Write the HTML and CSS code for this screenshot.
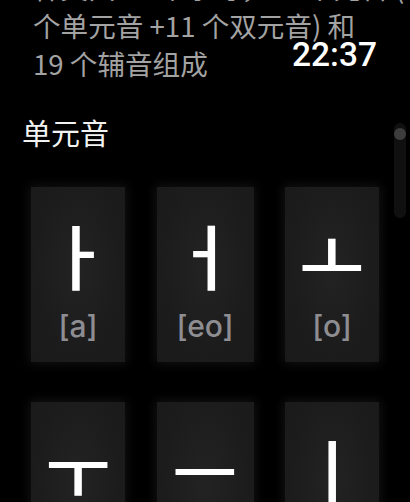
FILE: index.html
```html
<!DOCTYPE html>
<html lang="zh">
<head>
<meta charset="utf-8">
<link rel="stylesheet" href="styles.css">
</head>
<body>
<div class="screen">
  <div class="intro">
    <span class="line">韩文共 40 个字母，21 个元音 (10</span>
    <span class="line">个单元音 +11 个双元音) 和</span>
    <span class="line">19 个辅音组成</span>
  </div>
  <h2 class="title">单元音</h2>
  <div class="grid">
    <div class="card"><div class="jamo">ㅏ</div><div class="roman">[a]</div></div>
    <div class="card"><div class="jamo">ㅓ</div><div class="roman">[eo]</div></div>
    <div class="card"><div class="jamo">ㅗ</div><div class="roman">[o]</div></div>
    <div class="card"><div class="jamo">ㅜ</div><div class="roman">[u]</div></div>
    <div class="card"><div class="jamo">ㅡ</div><div class="roman">[eu]</div></div>
    <div class="card"><div class="jamo">ㅣ</div><div class="roman">[i]</div></div>
  </div>
  <div class="time">22:37</div>
  <div class="scroll"><div class="knob"></div></div>
</div>
</body>
</html>
```

FILE: styles.css
```css
html, body {
  margin: 0;
  padding: 0;
  background: #000;
}
.screen {
  position: relative;
  width: 410px;
  height: 502px;
  overflow: hidden;
  background: #000;
  font-family: "Noto Sans CJK SC", "Noto Sans", sans-serif;
}
.intro {
  margin-top: -32px;
  padding-left: 33px;
  font-size: 27.6px;
  line-height: 38px;
  color: #a3a3a3;
}
.line {
  display: block;
  white-space: nowrap;
}
.title {
  margin: 30px 0 0 22px;
  font-size: 29px;
  line-height: 40px;
  font-weight: 400;
  color: #f2f2f2;
}
.grid {
  margin-top: 35px;
  padding-left: 31px;
  display: grid;
  grid-template-columns: 94px 97px 94px;
  column-gap: 31.5px;
  row-gap: 40px;
}
.card {
  height: 175px;
  background: radial-gradient(ellipse at 50% 45%, #232324 0%, #1c1c1d 60%, #1a1a1b 100%);
  box-shadow: 0 0 10px 2px rgba(30, 30, 30, 0.6);
  display: flex;
  flex-direction: column;
  align-items: center;
}
.jamo {
  margin-top: 21px;
  height: 90px;
  font-family: "Noto Sans CJK KR", sans-serif;
  font-size: 71px;
  line-height: 90px;
  font-weight: 500;
  color: #fff;
}
.roman {
  margin-top: 8px;
  font-family: Inter, Roboto, "Liberation Sans", sans-serif;
  font-size: 30px;
  line-height: 40px;
  font-weight: 500;
  color: #8e8e92;
}
.time {
  position: absolute;
  top: 38px;
  right: 33px;
  font-family: Roboto, "Liberation Sans", sans-serif;
  font-size: 33.5px;
  line-height: 33px;
  font-weight: 500;
  color: #fff;
}
.scroll {
  position: absolute;
  top: 123px;
  left: 394px;
  width: 12px;
  height: 95px;
  border-radius: 6px;
  background: #101010;
}
.knob {
  margin-top: 5px;
  width: 12px;
  height: 12px;
  border-radius: 50%;
  background: #3d3d3d;
}
```
